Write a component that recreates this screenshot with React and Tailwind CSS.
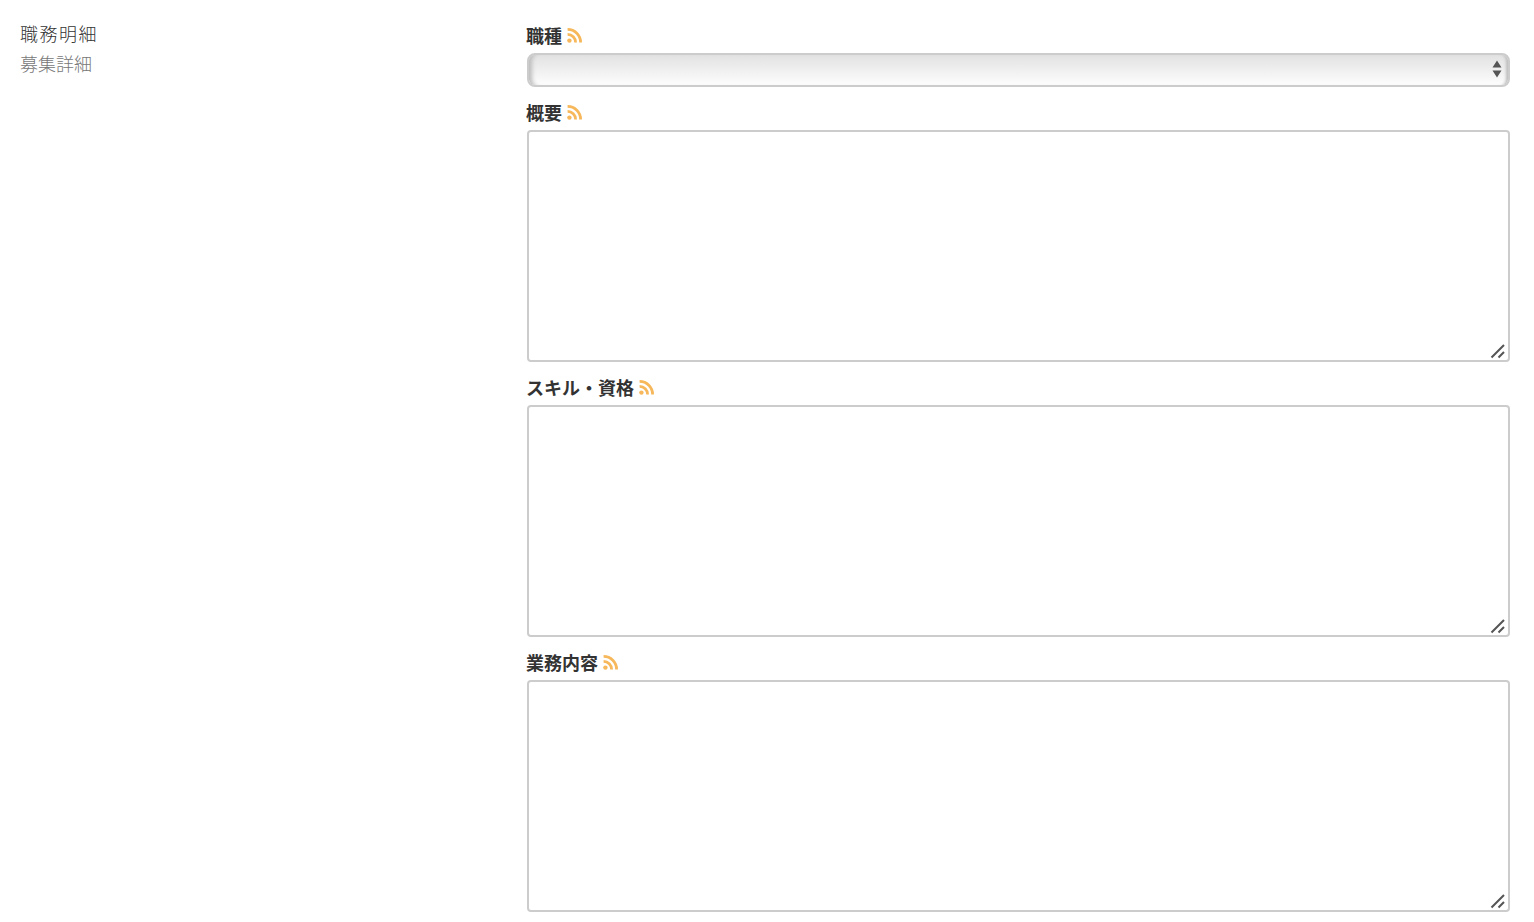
import React from "react";

const RssIcon = () => (
  <svg width="15" height="15" viewBox="0 0 15 15" className="ml-[5px] shrink-0 -mt-[1px]" fill="none">
    <circle cx="2.4" cy="12.6" r="2.2" fill="#f6b85a" />
    <path d="M0.6 6.4 A8 8 0 0 1 8.6 14.4" stroke="#f6b85a" strokeWidth="2.8" />
    <path d="M0.6 1.4 A13 13 0 0 1 13.6 14.4" stroke="#f6b85a" strokeWidth="2.8" />
  </svg>
);

const Label = ({ children }) => (
  <div className="flex items-center h-5 mb-[7px] text-[#333] text-[18px] font-semibold">
    <span className="-mt-[1px] -ml-[1px]">{children}</span>
    <RssIcon />
  </div>
);

const Area = () => (
  <div className="relative mb-4 last:mb-0">
    <textarea className="block w-full h-[232px] bg-white border-2 border-[#cccccc] rounded-[4px] outline-none resize-none" />
    <svg width="16" height="16" viewBox="0 0 16 16" className="absolute right-[4px] bottom-[3px] pointer-events-none">
      <path d="M1.5 14.5 L14 2 M8.5 14.5 L14 9" stroke="#555" strokeWidth="2" />
    </svg>
  </div>
);

export default function App() {
  return (
    <div className="flex pl-5 pr-6 pt-[26px] pb-[10px] bg-white min-h-[922px]" style={{ fontFamily: '"Noto Sans CJK JP", sans-serif' }}>
      <div className="w-[507px] shrink-0 -mt-[8px]">
        <div className="h-[30px] leading-[30px] text-[18px] tracking-[1.5px] font-light text-[#333]">職務明細</div>
        <div className="h-[30px] leading-[30px] text-[18px] font-light text-[#777]">募集詳細</div>
      </div>
      <div className="flex-1 min-w-0">
        <Label>職種</Label>
        <div className="relative mb-4">
          <div className="h-[34px] border-2 border-[#cccccc] rounded-[8px] bg-gradient-to-b from-[#e2e2e2] to-[#fdfdfd] shadow-[inset_6px_0_4px_-3px_#bdbdbd,inset_-5px_0_3px_-3px_#bdbdbd]" />
          <svg width="10" height="18" viewBox="0 0 10 18" className="absolute right-[8px] top-[7px]">
            <path d="M5 0.5 L9.5 7.5 H0.5 Z M5 17.5 L0.5 10.5 H9.5 Z" fill="#555" />
          </svg>
        </div>
        <Label>概要</Label>
        <Area />
        <Label>スキル・資格</Label>
        <Area />
        <Label>業務内容</Label>
        <Area />
      </div>
    </div>
  );
}
